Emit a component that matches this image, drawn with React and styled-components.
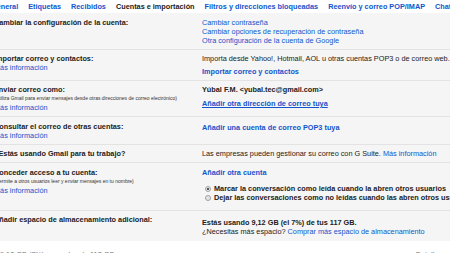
import React from "react";
import styled, { createGlobalStyle } from "styled-components";

const GlobalStyle = createGlobalStyle`
  html, body { margin: 0; padding: 0; background: #ffffff; }
  body {
    font-family: "Liberation Sans", Arial, sans-serif;
    font-size: 7.3px;
    color: #222222;
    overflow: hidden;
  }
`;

const Page = styled.div`
  width: 450px;
  height: 253px;
  overflow: hidden;
  background: #ffffff;
`;

const TabBar = styled.nav`
  display: flex;
  align-items: center;
  gap: 10px;
  height: 13px;
  margin-left: -9px;
  white-space: nowrap;
  background: #ffffff;
`;

const Tab = styled.span`
  font-weight: bold;
  font-size: 7.3px;
  color: ${(p) => (p.$active ? "#222222" : "#1155cc")};
`;

const Settings = styled.div`
  background: #f5f5f5;
  margin-left: -6px;
  width: 460px;
`;

const Row = styled.div`
  display: grid;
  grid-template-columns: 208px 1fr;
  padding: 4.5px 0 ${(p) => p.$pb ?? 4}px;
  border-bottom: ${(p) => (p.$last ? "none" : "1px solid #e3e3e3")};
  line-height: 9px;
  white-space: nowrap;
`;

const Left = styled.div`
  display: flex;
  flex-direction: column;
`;

const Right = styled.div`
  display: flex;
  flex-direction: column;
  padding-top: ${(p) => p.$pt ?? 0}px;
`;

const Label = styled.div`
  font-weight: bold;
  color: #222222;
`;

const Note = styled.div`
  font-size: 5px;
  color: #333333;
`;

const Link = styled.span`
  color: #1155cc;
  font-weight: ${(p) => (p.$bold ? "bold" : "normal")};
  text-decoration: ${(p) => (p.$underline ? "underline" : "none")};
  margin-top: ${(p) => p.$mt ?? 0}px;
`;

const Text = styled.div`
  font-weight: ${(p) => (p.$bold ? "bold" : "normal")};
  color: #222222;
  margin-top: ${(p) => p.$mt ?? 0}px;
`;

const RadioGroup = styled.div`
  display: flex;
  flex-direction: column;
  margin-top: 7.5px;
  padding-left: 3px;
`;

const RadioRow = styled.label`
  display: flex;
  align-items: center;
  gap: 3px;
  height: 9.3px;
  font-weight: bold;
`;

const RadioDot = styled.span`
  width: 4px;
  height: 4px;
  border-radius: 50%;
  border: 0.5px solid #a0a0a0;
  background: ${(p) => (p.$checked ? "radial-gradient(circle, #555 0 1px, #e8e8e8 1.2px)" : "#e6e6e6")};
  flex: none;
`;

const Footer = styled.div`
  display: flex;
  justify-content: space-between;
  padding: 9px 8px 0 0;
  font-size: 7.3px;
  color: #777777;
  white-space: nowrap;
`;

export default function App() {
  return (
    <Page>
      <GlobalStyle />
      <TabBar>
        <Tab>General</Tab>
        <Tab>Etiquetas</Tab>
        <Tab>Recibidos</Tab>
        <Tab $active>Cuentas e importación</Tab>
        <Tab>Filtros y direcciones bloqueadas</Tab>
        <Tab>Reenvío y correo POP/IMAP</Tab>
        <Tab>Chat</Tab>
      </TabBar>
      <Settings>
        <Row>
          <Left>
            <Label>Cambiar la configuración de la cuenta:</Label>
          </Left>
          <Right>
            <Link>Cambiar contraseña</Link>
            <Link>Cambiar opciones de recuperación de contraseña</Link>
            <Link>Otra configuración de la cuenta de Google</Link>
          </Right>
        </Row>
        <Row>
          <Left>
            <Label>Importar correo y contactos:</Label>
            <Link>Más información</Link>
          </Left>
          <Right>
            <Text>Importa desde Yahoo!, Hotmail, AOL u otras cuentas POP3 o de correo web.</Text>
            <Link $bold $mt={3.5}>Importar correo y contactos</Link>
          </Right>
        </Row>
        <Row>
          <Left>
            <Label>Enviar correo como:</Label>
            <Note>(Utiliza Gmail para enviar mensajes desde otras direcciones de correo electrónico)</Note>
            <Link>Más información</Link>
          </Left>
          <Right>
            <Text $bold>Yúbal F.M. &lt;yubal.tec@gmail.com&gt;</Text>
            <Link $bold $underline $mt={5}>Añadir otra dirección de correo tuya</Link>
          </Right>
        </Row>
        <Row>
          <Left>
            <Label>Consultar el correo de otras cuentas:</Label>
            <Link>Más información</Link>
          </Left>
          <Right $pt={1.5}>
            <Link $bold>Añadir una cuenta de correo POP3 tuya</Link>
          </Right>
        </Row>
        <Row>
          <Left>
            <Label>¿Estás usando Gmail para tu trabajo?</Label>
          </Left>
          <Right>
            <Text>
              Las empresas pueden gestionar su correo con G Suite. <Link>Más información</Link>
            </Text>
          </Right>
        </Row>
        <Row $pb={7}>
          <Left>
            <Label>Conceder acceso a tu cuenta:</Label>
            <Note>(Permite a otros usuarios leer y enviar mensajes en tu nombre)</Note>
            <Link>Más información</Link>
          </Left>
          <Right>
            <Link $bold>Añadir otra cuenta</Link>
            <RadioGroup>
              <RadioRow>
                <RadioDot $checked />
                Marcar la conversación como leída cuando la abren otros usuarios
              </RadioRow>
              <RadioRow>
                <RadioDot />
                Dejar las conversaciones como no leídas cuando las abren otros usuarios
              </RadioRow>
            </RadioGroup>
          </Right>
        </Row>
        <Row $last $pb={5}>
          <Left>
            <Label>Añadir espacio de almacenamiento adicional:</Label>
          </Left>
          <Right $pt={3}>
            <Text $bold>Estás usando 9,12 GB (el 7%) de tus 117 GB.</Text>
            <Text>
              ¿Necesitas más espacio? <Link>Comprar más espacio de almacenamiento</Link>
            </Text>
          </Right>
        </Row>
      </Settings>
      <Footer>
        <span>9,12 GB (7%) ocupados de 117 GB</span>
        <span>Detalles</span>
      </Footer>
    </Page>
  );
}
